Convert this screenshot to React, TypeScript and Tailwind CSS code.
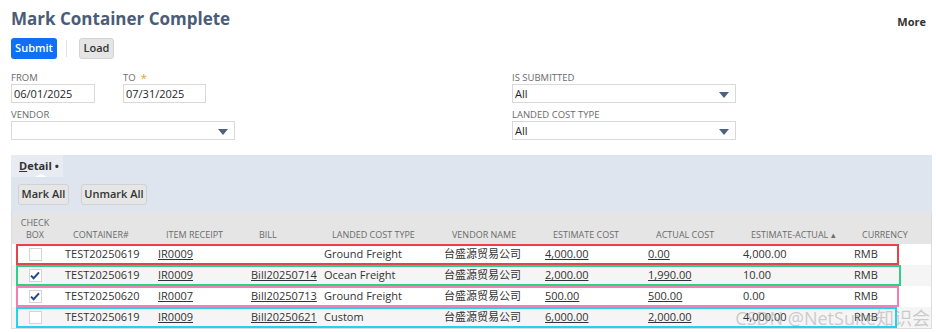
import React from 'react';

type Row = {
  checked: boolean;
  container: string;
  receipt: string;
  bill: string;
  type: string;
  vendor: string;
  estimate: string;
  actual: string;
  diff: string;
  currency: string;
  mark: string;
};

const rows: Row[] = [
  { checked: false, container: 'TEST20250619', receipt: 'IR0009', bill: '', type: 'Ground Freight', vendor: '台盛源贸易公司', estimate: '4,000.00', actual: '0.00', diff: '4,000.00', currency: 'RMB', mark: 'border-[#e8434c] right-[32px]' },
  { checked: true, container: 'TEST20250619', receipt: 'IR0009', bill: 'Bill20250714', type: 'Ocean Freight', vendor: '台盛源贸易公司', estimate: '2,000.00', actual: '1,990.00', diff: '10.00', currency: 'RMB', mark: 'border-[#2fcf86] right-[30px]' },
  { checked: true, container: 'TEST20250620', receipt: 'IR0007', bill: 'Bill20250713', type: 'Ground Freight', vendor: '台盛源贸易公司', estimate: '500.00', actual: '500.00', diff: '0.00', currency: 'RMB', mark: 'border-[#f57fb4] right-[32px]' },
  { checked: false, container: 'TEST20250619', receipt: 'IR0009', bill: 'Bill20250621', type: 'Custom', vendor: '台盛源贸易公司', estimate: '6,000.00', actual: '2,000.00', diff: '4,000.00', currency: 'RMB', mark: 'border-[#22d3ee] right-[34px]' },
];

// column widths, starting at the table's left edge (x=11)
const cols = ['w-[46px]', 'w-[93px]', 'w-[93px]', 'w-[73px]', 'w-[120px]', 'w-[101px]', 'w-[103px]', 'w-[95px]', 'w-[111px]', 'flex-1'];

function Arrow() {
  return (
    <svg width="10" height="6" viewBox="0 0 10 6" className="absolute right-[6px] top-[7px]">
      <path d="M0 0h10L5 6z" fill="#4d6282" />
    </svg>
  );
}

function Field({ label, value, width, star }: { label: string; value: string; width: string; star?: boolean }) {
  return (
    <div>
      <div className="flex h-[9px] items-start text-[9.5px] leading-[9px] text-[#6b6b6b]">
        {label}
        {star && <span className="ml-[5px] text-[11px] leading-[9px] text-[#e0a11f]">*</span>}
      </div>
      <div className={`mt-[2px] h-[19px] border border-[#d9d9d9] bg-white pl-[2px] text-[11px] leading-[17px] text-[#262626] ${width}`}>{value}</div>
    </div>
  );
}

function Select({ label, value, width }: { label: string; value: string; width: string }) {
  return (
    <div>
      <div className="h-[9px] text-[9.5px] leading-[9px] text-[#6b6b6b]">{label}</div>
      <div className={`relative mt-[2px] h-[19px] border border-[#d9d9d9] bg-white pl-[2px] text-[11px] leading-[17px] text-[#262626] ${width}`}>
        {value}
        <Arrow />
      </div>
    </div>
  );
}

function Box({ checked }: { checked: boolean }) {
  return (
    <div className="flex h-[13px] w-[13px] items-center justify-center border border-[#d4d4d4] bg-white">
      {checked && (
        <svg width="10" height="9" viewBox="0 0 10 9">
          <path d="M1 4.6l2.6 2.6L9 1.4" fill="none" stroke="#24498c" strokeWidth="2" />
        </svg>
      )}
    </div>
  );
}

export default function App() {
  const heads = ['', 'CONTAINER#', 'ITEM RECEIPT', 'BILL', 'LANDED COST TYPE', 'VENDOR NAME', 'ESTIMATE COST', 'ACTUAL COST', 'ESTIMATE-ACTUAL ▴', 'CURRENCY'];
  return (
    <div className="relative h-[332px] w-[936px] overflow-hidden bg-white font-['Open_Sans','Noto_Sans_CJK_SC',sans-serif]">
      <div className="flex items-start justify-between pl-[11px] pr-[10px] pt-[6px]">
        <h1 className="text-[17px] font-bold leading-[25px] text-[#4a5c78]">Mark Container Complete</h1>
        <span className="mt-[8px] text-[11px] font-bold text-[#333]">More</span>
      </div>

      <div className="mt-[7px] flex items-center pl-[11px]">
        <button className="h-[21px] w-[46px] rounded-[3px] bg-[#0e6ff7] text-[11px] font-semibold text-white">Submit</button>
        <div className="ml-[9px] h-[17px] w-px bg-[#e3e3e3]" />
        <button className="ml-[12px] h-[21px] w-[35px] rounded-[3px] border border-[#d4d4d4] bg-[#e5e5e5] text-[11px] font-semibold text-[#333]">Load</button>
      </div>

      <div className="mt-[14px] flex pl-[11px]">
        <div className="w-[501px]">
          <div className="flex gap-[28px]">
            <Field label="FROM" value="06/01/2025" width="w-[84px]" />
            <Field label="TO" value="07/31/2025" width="w-[83px]" star />
          </div>
          <div className="mt-[7px]">
            <Select label="VENDOR" value="" width="w-[224px]" />
          </div>
        </div>
        <div>
          <Select label="IS SUBMITTED" value="All" width="w-[224px]" />
          <div className="mt-[7px]">
            <Select label="LANDED COST TYPE" value="All" width="w-[224px]" />
          </div>
        </div>
      </div>

      <div className="ml-[11px] mt-[15px] w-[921px]">
        <div className="bg-[#dfe5ee]">
          <div className="relative h-[22px] w-[52px] bg-[#e8ecf2] pl-[8px] text-[11px] font-bold leading-[22px] text-[#333]">
            <span className="underline">D</span>etail •
            <div className="absolute bottom-0 left-[24px] h-0 w-0 border-x-[6px] border-b-[3px] border-x-transparent border-b-white" />
          </div>
          <div className="flex gap-[12px] pb-[7px] pl-[7px] pt-[7px]">
            <button className="h-[21px] w-[51px] rounded-[3px] border border-[#d1d1d1] bg-[#e6e6e6] text-[11px] font-semibold text-[#333]">Mark All</button>
            <button className="h-[21px] w-[66px] rounded-[3px] border border-[#d1d1d1] bg-[#e6e6e6] text-[11px] font-semibold text-[#333]">Unmark All</button>
          </div>
        </div>

        <div className="border-x border-b border-[#dcdcdc]">
          <div className="flex h-[32px] items-end bg-[#e5e5e5] pb-[3px] text-[9px] leading-[12px] text-[#6b6b6b]">
            {heads.map((h, i) => (
              <div key={i} className={`${cols[i]} ${i === 0 ? 'text-center' : 'pl-[15px]'} whitespace-nowrap`}>
                {i === 0 ? (
                  <>
                    CHECK
                    <br />
                    BOX
                  </>
                ) : (
                  h
                )}
              </div>
            ))}
          </div>
          {rows.map((r, i) => (
            <div key={i} className={`relative flex h-[21px] items-center text-[11px] text-[#333] ${i % 2 ? 'bg-[#f5f5f5]' : 'bg-white'}`}>
              <div className={`${cols[0]} flex justify-center`}>
                <Box checked={r.checked} />
              </div>
              <div className={`${cols[1]} pl-[7px]`}>{r.container}</div>
              <div className={`${cols[2]} pl-[7px] underline`}>{r.receipt}</div>
              <div className={`${cols[3]} pl-[7px] underline`}>{r.bill}</div>
              <div className={`${cols[4]} pl-[7px]`}>{r.type}</div>
              <div className={`${cols[5]} pl-[7px]`}>{r.vendor}</div>
              <div className={`${cols[6]} pl-[7px] underline`}>{r.estimate}</div>
              <div className={`${cols[7]} pl-[7px] underline`}>{r.actual}</div>
              <div className={`${cols[8]} pl-[7px]`}>{r.diff}</div>
              <div className={`${cols[9]} pl-[7px]`}>{r.currency}</div>
              <div className={`pointer-events-none absolute bottom-0 left-[4px] top-0 border-2 ${r.mark}`} />
            </div>
          ))}
        </div>
      </div>

      <div className="pointer-events-none absolute bottom-[3px] right-[6px] text-[18px] leading-[22px] text-[#a0a0a0]/50">
        CSDN @NetSuite知识会
      </div>
    </div>
  );
}
